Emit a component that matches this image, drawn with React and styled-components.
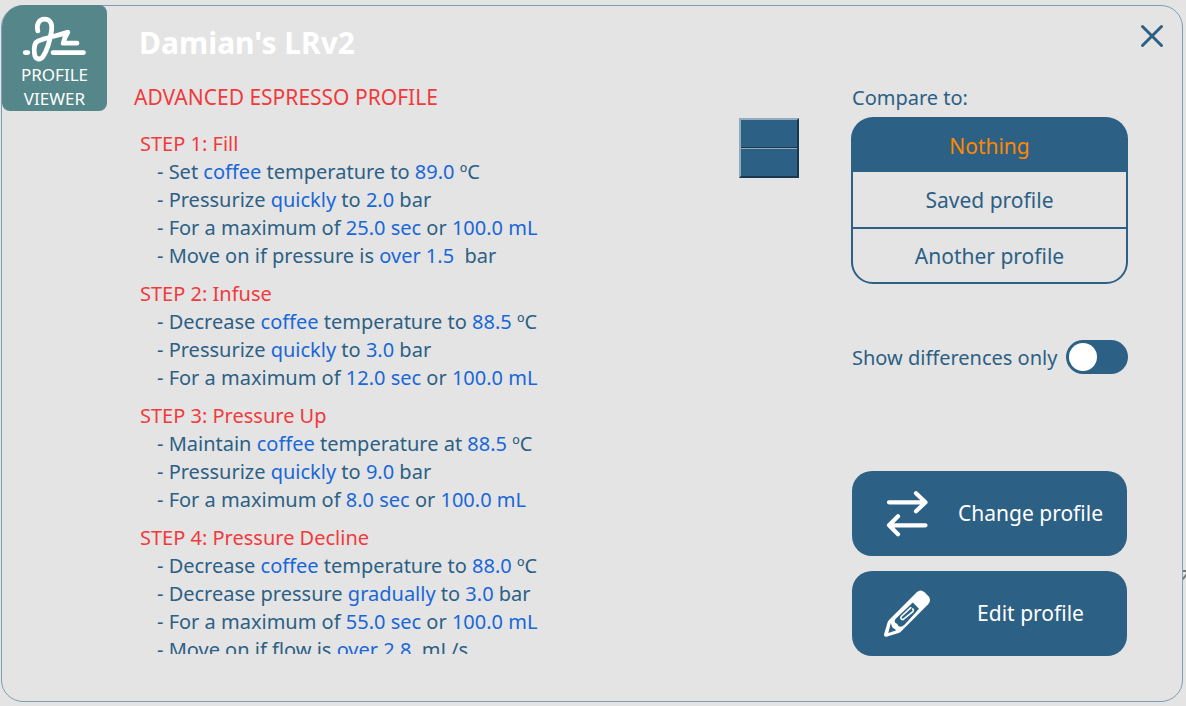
import React, { useState } from 'react';
import styled, { createGlobalStyle } from 'styled-components';

const blue = '#2c6084';
const red = '#f13a3c';
const surface = '#e4e4e4';

const GlobalStyle = createGlobalStyle`
  * { box-sizing: border-box; }
  body {
    margin: 0;
    background: ${surface};
    color: ${blue};
    font-family: "Noto Sans", "Open Sans", sans-serif;
  }
  button, input { font: inherit; color: inherit; }
`;

const Page = styled.div`
  position: relative;
  height: 100vh;
  padding: 5px 3px 4px 1px;
  overflow: hidden;
`;

const EdgeMark = styled.svg`
  position: absolute;
  right: 0;
  top: 569px;
`;

const Panel = styled.main`
  display: flex;
  height: 100%;
  border: 1px solid #7f9fb5;
  border-radius: 22px;
`;

const Tile = styled.div`
  flex: none;
  width: 105px;
  height: 106px;
  margin-top: -1px;
  padding-top: 10px;
  border-radius: 22px 8px 8px 8px;
  background: #54868a;
  color: #fff;
  font-size: 17px;
  line-height: 24px;
  text-align: center;
`;

const TileIcon = styled.svg`
  display: block;
  margin: 0 auto;
`;

const Content = styled.section`
  flex: 1;
  min-width: 0;
  display: flex;
  flex-direction: column;
  padding: 16px 0 47px 27px;
`;

const Title = styled.h1`
  margin: 0 0 18px 5px;
  color: #fff;
  font-size: 30px;
  font-weight: 700;
  line-height: 42px;
`;

const Subtitle = styled.h2`
  margin: 0 0 6px;
  color: ${red};
  font-size: 21px;
  font-weight: 400;
  line-height: 30px;
`;

const Body = styled.div`
  flex: 1;
  min-height: 0;
  display: flex;
  align-items: flex-start;
`;

const Steps = styled.div`
  flex: 1;
  height: 100%;
  padding: 12px 0 0 6px;
  overflow: hidden;
  font-size: 20px;
  line-height: 28px;
`;

const Step = styled.section`
  margin-bottom: 10px;
`;

const StepTitle = styled.h3`
  margin: 0;
  color: ${red};
  font-size: 20px;
  font-weight: 400;
`;

const StepList = styled.ul`
  margin: 0;
  padding: 0 0 0 17px;
  list-style: none;
  white-space: pre;
`;

const Value = styled.span`
  color: #1967d8;
`;

const Scroller = styled.input`
  flex: none;
  appearance: none;
  width: 60px;
  height: 60px;
  margin: 0;
  border: 2px solid;
  border-color: #93abbb #18384f #18384f #93abbb;
  background: linear-gradient(${blue} 27px, #18384f 27px 28px, #93abbb 28px 29px, ${blue} 29px);

  &::-webkit-slider-thumb {
    appearance: none;
    width: 56px;
    height: 56px;
    background: transparent;
  }
`;

const Side = styled.aside`
  flex: none;
  display: flex;
  flex-direction: column;
  width: 277px;
  margin-left: 52px;
  padding: 77px 0 45px;
  font-size: 20px;
`;

const Compare = styled.fieldset`
  margin: 0;
  padding: 0;
  border: 0;
`;

const CompareTitle = styled.legend`
  padding: 0 1px 4px;
  line-height: 30px;
`;

const Options = styled.div`
  display: grid;
  grid-template-rows: 55px 55px 57px;
`;

const Option = styled.label`
  display: flex;
  align-items: center;
  justify-content: center;
  border: 0 solid ${blue};
  border-width: 0 2px;
  font-size: 21px;
  cursor: pointer;
  color: ${(p) => (p.$selected ? '#ff8800' : blue)};
  background: ${(p) => (p.$selected ? blue : 'transparent')};

  &:first-child {
    border-width: 2px 2px 0;
    border-radius: 22px 22px 0 0;
  }
  &:last-child {
    border-width: 2px;
    border-radius: 0 0 22px 22px;
  }

  input {
    appearance: none;
    width: 0;
    height: 0;
    margin: 0;
  }
`;

const SwitchRow = styled.label`
  display: flex;
  align-items: center;
  justify-content: space-between;
  margin-top: 56px;
  padding-left: 1px;
  white-space: nowrap;
`;

const Switch = styled.input`
  appearance: none;
  flex: none;
  width: 62px;
  height: 34px;
  margin: 0;
  padding: 3px;
  border-radius: 17px;
  background: ${blue};

  &::before {
    content: "";
    display: block;
    width: 28px;
    height: 28px;
    border-radius: 50%;
    background: #fff;
  }
  &:checked::before { margin-left: auto; }
`;

const Actions = styled.div`
  display: grid;
  gap: 15px;
  margin-top: auto;
  padding: 0 1px;
`;

const Action = styled.button`
  display: flex;
  align-items: center;
  height: 85px;
  padding: 0 14px 2px 30px;
  border: 0;
  border-radius: 20px;
  background: ${blue};
  color: #fff;
  font-size: 21px;
`;

const ActionText = styled.span`
  flex: 1;
  margin-left: 16px;
  text-align: center;
  white-space: nowrap;
`;

const CloseButton = styled.button`
  flex: none;
  width: 48px;
  height: 48px;
  margin: 6px 6px 0 0;
  padding: 4px 0 0;
  border: 0;
  background: none;
`;

const steps = [
  ['STEP 1: Fill', [
    'Set *coffee* temperature to *89.0* ºC',
    'Pressurize *quickly* to *2.0* bar',
    'For a maximum of *25.0 sec* or *100.0 mL*',
    'Move on if pressure is *over 1.5*  bar',
  ]],
  ['STEP 2: Infuse', [
    'Decrease *coffee* temperature to *88.5* ºC',
    'Pressurize *quickly* to *3.0* bar',
    'For a maximum of *12.0 sec* or *100.0 mL*',
  ]],
  ['STEP 3: Pressure Up', [
    'Maintain *coffee* temperature at *88.5* ºC',
    'Pressurize *quickly* to *9.0* bar',
    'For a maximum of *8.0 sec* or *100.0 mL*',
  ]],
  ['STEP 4: Pressure Decline', [
    'Decrease *coffee* temperature to *88.0* ºC',
    'Decrease pressure *gradually* to *3.0* bar',
    'For a maximum of *55.0 sec* or *100.0 mL*',
    'Move on if flow is *over 2.8*  mL/s',
  ]],
];

const options = ['Nothing', 'Saved profile', 'Another profile'];

// Odd pieces of a line are the values wrapped in asterisks.
function Line({ text }) {
  return (
    <li>
      - {text.split('*').map((part, i) => (i % 2 ? <Value key={i}>{part}</Value> : part))}
    </li>
  );
}

function SignatureIcon() {
  return (
    <TileIcon width="66" height="48" viewBox="22 14 66 48" fill="none" stroke="#fff" strokeWidth="4.8" strokeLinecap="round" strokeLinejoin="round" aria-hidden="true">
      <path d="M37.8 29.8C36.2 23.5 39 18.2 44.5 18.2C50.5 18.2 52.8 23 51.3 31C49.8 40 46.5 50.5 43 55.500C40 59.500 35.2 58.600 34.500 53C33.600 46.500 34.500 41.500 38.500 39.800C44 37.200 57 34.800 67.800 31.200C65.800 34.500 64.200 37.500 63.200 42.200H77" />
      <path d="M25.200 51.600H27.800M53 51.600H83.500" />
    </TileIcon>
  );
}

function SwapIcon() {
  return (
    <svg width="50" height="50" viewBox="882 488 50 50" fill="none" stroke="#fff" strokeWidth="4.200" strokeLinecap="round" strokeLinejoin="round" aria-hidden="true">
      <path d="M889 502.300H925.500M916 493.300L925.500 502.300L916 511.300M925.500 525.300H889M898 516.300L889 525.300L898 534.300" />
    </svg>
  );
}

function PencilIcon() {
  return (
    <svg width="50" height="50" viewBox="882 588 50 50" aria-hidden="true">
      <path fill="#fff" d="M916.500 592.500Q920.500 588.800 924.500 592.200L928.500 596.200Q931.800 600.200 928.200 604.200L901 631.500Q900 632.500 898.500 633L886.500 636.800Q883.300 637 884.200 633.800L887.500 622.500Q888 621 889 620Z" />
      <path fill={blue} d="M912.800 602.500L919 608.800L904.500 624.800Q901.300 627.500 898.600 626.300Q897.800 623.800 895 622.500Q893.800 619.800 897 617.500Z" />
      <path fill="none" stroke="#fff" strokeWidth="1.600" strokeLinecap="round" strokeLinejoin="round" d="M910.800 607.600L901.300 616.500Q899.800 619.300 903 619.600L912.800 611.600Q914 610 912.600 609" />
      <path fill={blue} d="M890.800 623L892.200 627.300L896.300 630.200L888.300 633Z" />
    </svg>
  );
}

export default function App() {
  const [choice, setChoice] = useState('Nothing');
  return (
    <Page>
      <GlobalStyle />
      <EdgeMark width="3" height="12" viewBox="0 0 3 12" fill="none" stroke="#777" strokeWidth="2" aria-hidden="true">
        <path d="M0 2H4M5 4L-1 11" />
      </EdgeMark>
      <Panel>
        <Tile>
          <SignatureIcon />
          PROFILE<br />VIEWER
        </Tile>
        <Content>
          <Title>Damian's LRv2</Title>
          <Subtitle>ADVANCED ESPRESSO PROFILE</Subtitle>
          <Body>
            <Steps>
              {steps.map(([name, lines]) => (
                <Step key={name}>
                  <StepTitle>{name}</StepTitle>
                  <StepList>
                    {lines.map((line) => <Line key={line} text={line} />)}
                  </StepList>
                </Step>
              ))}
            </Steps>
            <Scroller type="range" defaultValue="0" aria-label="Scroll steps" />
          </Body>
        </Content>
        <Side>
          <Compare>
            <CompareTitle>Compare to:</CompareTitle>
            <Options>
              {options.map((name) => (
                <Option key={name} $selected={choice === name}>
                  <input type="radio" name="compare" checked={choice === name} onChange={() => setChoice(name)} />
                  {name}
                </Option>
              ))}
            </Options>
          </Compare>
          <SwitchRow>
            Show differences only
            <Switch type="checkbox" role="switch" />
          </SwitchRow>
          <Actions>
            <Action type="button">
              <SwapIcon />
              <ActionText>Change profile</ActionText>
            </Action>
            <Action type="button">
              <PencilIcon />
              <ActionText>Edit profile</ActionText>
            </Action>
          </Actions>
        </Side>
        <CloseButton type="button" aria-label="Close">
          <svg width="24" height="24" viewBox="0 0 24 24" fill="none" stroke={blue} strokeWidth="3" strokeLinecap="round" aria-hidden="true">
            <path d="M2.500 2.500L21.500 21.500M21.500 2.500L2.500 21.500" />
          </svg>
        </CloseButton>
      </Panel>
    </Page>
  );
}
